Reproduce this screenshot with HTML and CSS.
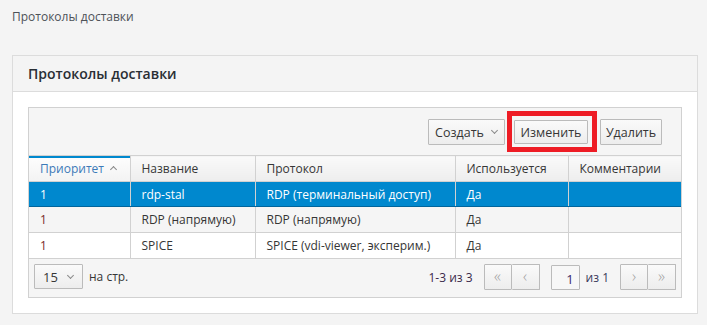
FILE: index.html
```html
<!DOCTYPE html>
<html lang="ru">
<head>
  <meta charset="UTF-8" />
  <title>Протоколы доставки</title>
  <link rel="stylesheet" href="styles.css">
</head>
<body>

  <div class="crumbs">Протоколы доставки</div>

  <div class="panel">
    <div class="panel-head">Протоколы доставки</div>
    <div class="panel-body">
      <div class="grid-box">

        <div class="toolbar">
          <button class="btn create">Создать <span class="caret"></span></button>
          <span class="mark">
            <button class="btn">Изменить</button>
          </span>
          <button class="btn remove">Удалить</button>
        </div>

        <table class="grid">
          <colgroup>
            <col style="width:101px">
            <col style="width:125px">
            <col style="width:200px">
            <col style="width:113px">
            <col>
          </colgroup>
          <thead>
            <tr>
              <th class="sorted">Приоритет <span class="sort-up"></span></th>
              <th>Название</th>
              <th>Протокол</th>
              <th>Используется</th>
              <th>Комментарии</th>
            </tr>
          </thead>
          <tbody>
            <tr class="selected">
              <td>1</td>
              <td>rdp-stal</td>
              <td>RDP (терминальный доступ)</td>
              <td>Да</td>
              <td></td>
            </tr>
            <tr class="odd">
              <td class="num">1</td>
              <td>RDP (напрямую)</td>
              <td>RDP (напрямую)</td>
              <td>Да</td>
              <td></td>
            </tr>
            <tr>
              <td class="num">1</td>
              <td>SPICE</td>
              <td>SPICE (vdi-viewer, эксперим.)</td>
              <td>Да</td>
              <td></td>
            </tr>
          </tbody>
        </table>

        <div class="footer">
          <div class="per-page">
            <button class="btn size">15 <span class="caret"></span></button>
            <span>на стр.</span>
          </div>
          <div class="pager">
            <span class="count">1-3 из 3</span>
            <div class="btn-group">
              <button class="btn pg">&laquo;</button>
              <button class="btn pg">&lsaquo;</button>
            </div>
            <span class="page-input">1</span>
            <span class="of">из 1</span>
            <div class="btn-group">
              <button class="btn pg">&rsaquo;</button>
              <button class="btn pg">&raquo;</button>
            </div>
          </div>
        </div>

      </div>
    </div>
  </div>

</body>
</html>
```

FILE: styles.css
```css
* {
  box-sizing: border-box;
}

body {
  margin: 0;
  background-color: #f4f4f4;
  font-family: 'Open Sans', sans-serif;
  font-size: 12px;
  color: #363636;
}

.crumbs {
  padding: 8px 12px 0;
  height: 55px;
  color: #4d5258;
}

.panel {
  margin: 0 9px 0 12px;
  border: 1px solid #dcdcdc;
  background-color: #fff;
}

.panel-head {
  height: 36px;
  padding: 8px 15px 0;
  background-color: #f4f4f4;
  border-bottom: 1px solid #dcdcdc;
  font-size: 14px;
  font-weight: 600;
  color: #292e34;
}

.panel-body {
  padding: 15px;
}

.grid-box {
  border: 1px solid #d1d1d1;
}

.toolbar {
  height: 47px;
  padding: 10px 19px 0 0;
  background-color: #f5f5f5;
  display: flex;
  justify-content: flex-end;
  align-items: flex-start;
}

.btn {
  font-family: 'Open Sans', sans-serif;
  font-size: 12px;
  color: #363636;
  height: 26px;
  padding: 0 8px;
  background: linear-gradient(#fafafa, #ededed);
  border: 1px solid #bbb;
  border-radius: 1px;
  display: inline-flex;
  align-items: center;
  justify-content: center;
  gap: 6px;
}

.toolbar .btn {
  margin-top: 1px;
  font-size: 12.5px;
}

.btn.create {
  width: 77px;
  padding: 0;
}

.btn.remove {
  width: 62px;
  padding: 0;
}

.caret {
  width: 5px;
  height: 5px;
  border-right: 1px solid #8a8a8a;
  border-bottom: 1px solid #8a8a8a;
  transform: rotate(45deg);
  margin: -3px 1px 0 2px;
}

.mark {
  position: relative;
  margin: 0 12px 0 9px;
}

.mark::after {
  content: "";
  position: absolute;
  left: -7px;
  right: -9px;
  top: -7px;
  bottom: -8px;
  border: 5px solid #ee1c25;
}

.mark .btn {
  height: 24px;
  margin-top: 2px;
  width: 74px;
  padding: 0;
}

.grid {
  width: 100%;
  border-collapse: collapse;
  table-layout: fixed;
}

.grid th,
.grid td {
  text-align: left;
  font-weight: normal;
  padding: 0 11px;
  border: 1px solid #d1d1d1;
  white-space: nowrap;
}

.grid tr > :first-child {
  border-left: none;
}

.grid tr > :last-child {
  border-right: none;
}

.grid th {
  height: 26px;
  background: linear-gradient(#fafafa, #ededed);
  color: #363636;
}

.grid th.sorted {
  color: #3d7ab8;
  background: linear-gradient(#fdfdfd, #f3f3f3);
  box-shadow: inset 0 2px 0 #0088ce;
}

.sort-up {
  display: inline-block;
  width: 5px;
  height: 5px;
  border-left: 1px solid #888;
  border-top: 1px solid #888;
  transform: rotate(45deg);
  margin-left: 4px;
  vertical-align: 1px;
}

.grid td {
  height: 26px;
}

.grid tr.selected td {
  background-color: #0088ce;
  color: #fff;
  border-bottom-color: #00659c;
  height: 25px;
}

.grid tr.odd td {
  background-color: #f5f5f5;
}

.grid td.num {
  color: #7a2a2a;
}

.footer {
  height: 38px;
  padding: 5px 5px 0;
  background-color: #f5f5f5;
  display: flex;
  justify-content: space-between;
  align-items: flex-start;
}

.per-page {
  display: flex;
  align-items: center;
  gap: 6px;
}

.btn.size {
  width: 49px;
  height: 25px;
  font-size: 13px;
  gap: 8px;
  justify-content: flex-start;
}

.pager {
  display: flex;
  align-items: center;
  height: 26px;
}

.count {
  margin-right: 11px;
  color: #3a2a4a;
}

.btn-group {
  display: flex;
}

.btn.pg {
  width: 28px;
  color: #a0a0a0;
  font-size: 16px;
  font-weight: 300;
  padding: 0 0 2px;
}

.btn-group .btn.pg + .btn.pg {
  border-left: none;
}

.page-input {
  width: 29px;
  height: 25px;
  margin-left: 11px;
  border: 1px solid #bbb;
  border-radius: 1px;
  background-color: #f7f7f7;
  text-align: right;
  padding: 4px 5px 0 0;
  font-size: 13px;
  color: #3a2a6a;
}

.of {
  margin: 0 11px 0 6px;
  font-size: 12px;
  color: #3a3a5a;
}
```
